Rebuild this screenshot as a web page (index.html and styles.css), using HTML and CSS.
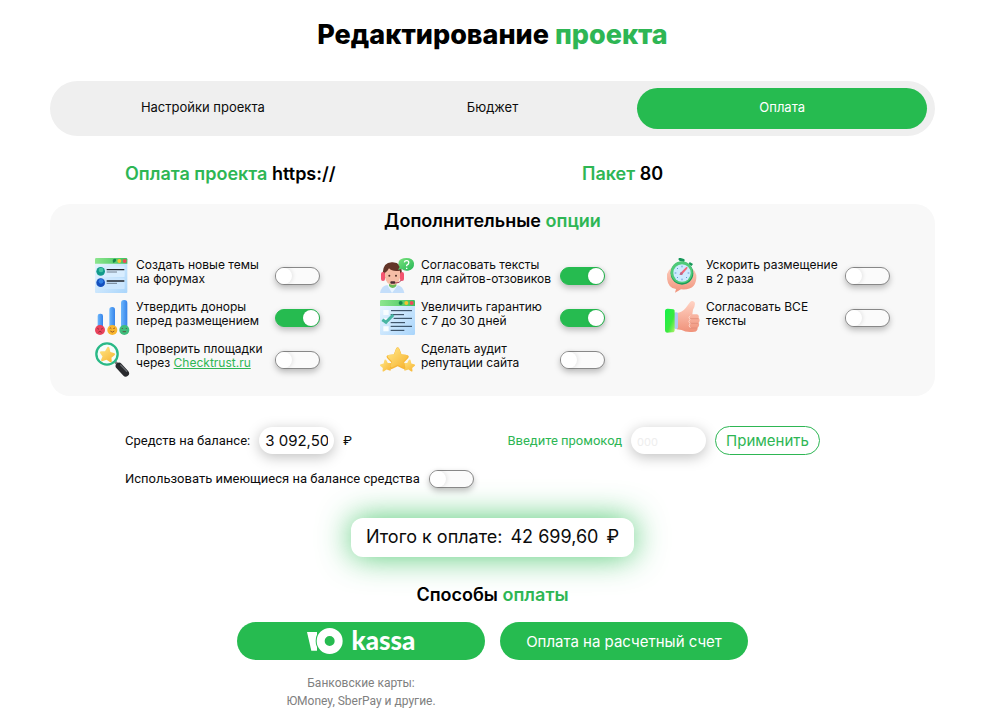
FILE: index.html
```html
<!DOCTYPE html>
<html lang="ru">
<head>
<meta charset="utf-8">
<meta name="viewport" content="width=device-width, initial-scale=1">
<title>Редактирование проекта</title>
<link rel="stylesheet" href="styles.css">
</head>
<body>
<svg class="defs" aria-hidden="true">
  <defs>
    <linearGradient id="sheet" x1="0" y1="0" x2="1" y2="1"><stop offset="0" stop-color="#eef8ff"/><stop offset="1" stop-color="#a9d5fb"/></linearGradient>
    <linearGradient id="bar" x1="0" y1="0" x2="1" y2="0"><stop offset="0" stop-color="#8ee68f"/><stop offset="1" stop-color="#3fc25c"/></linearGradient>
    <linearGradient id="tube" x1="0" y1="0" x2="1" y2="0"><stop offset="0" stop-color="#6cb6fb"/><stop offset="1" stop-color="#3583ea"/></linearGradient>
    <linearGradient id="gold" x1="0" y1="0" x2="1" y2="1"><stop offset="0" stop-color="#ffe889"/><stop offset="1" stop-color="#f7b32f"/></linearGradient>
    <linearGradient id="skin" x1="0" y1="0" x2="0" y2="1"><stop offset="0" stop-color="#ffd3c4"/><stop offset="1" stop-color="#f0927a"/></linearGradient>
    <linearGradient id="leaf" x1="0" y1="0" x2="1" y2="1"><stop offset="0" stop-color="#7be37d"/><stop offset="1" stop-color="#25b556"/></linearGradient>
    <linearGradient id="cuff" x1="0" y1="0" x2="1" y2="1"><stop offset="0" stop-color="#12f24a"/><stop offset="0.6" stop-color="#3be93f"/><stop offset="1" stop-color="#b4f06a"/></linearGradient>
    <path id="star" d="M0-17 Q2-17 3-14 L6-6 L14-5 Q19-4 16 0 L10 6 L12 14 Q12 18 8 16 L0 12 L-8 16 Q-12 18 -12 14 L-10 6 L-16 0 Q-19-4 -14-5 L-6-6 L-3-14 Q-2-17 0-17 Z"/>
  </defs>
</svg>
<main class="page">
  <h1 class="title">Редактирование <span class="accent">проекта</span></h1>

  <nav class="tabs">
    <a class="tab" href="#settings">Настройки проекта</a>
    <a class="tab" href="#budget">Бюджет</a>
    <a class="tab tab-active" href="#payment" aria-current="page">Оплата</a>
  </nav>

  <div class="summary">
    <h2 class="heading"><span class="accent">Оплата проекта</span> https://</h2>
    <h2 class="heading"><span class="accent">Пакет</span> 80</h2>
  </div>

  <section class="options">
    <h2 class="heading">Дополнительные <span class="accent">опции</span></h2>
    <div class="options-grid">
      <div class="option">
        <svg class="icon" viewBox="0 0 105 105" aria-hidden="true">
          <rect x="0" y="1" width="97" height="104" rx="3" fill="url(#sheet)"/>
          <path d="M0 17V4Q0 0 4 0H93Q97 0 97 4V17Z" fill="url(#bar)"/>
          <path d="M53 6q8-8 11 0q-3 9-10 8Z" fill="#15864b"/><circle cx="73" cy="9" r="6" fill="#f6c32f"/><circle cx="89" cy="9" r="6" fill="#ef4a5a"/>
          <rect x="8" y="25" width="81" height="32" rx="2" fill="#d8edff"/><rect x="8" y="61" width="81" height="32" rx="2" fill="#cbe6fe"/>
          <circle cx="17" cy="40" r="13" fill="#129a8b"/><circle cx="18" cy="36" r="7" fill="#43c5a5"/>
          <circle cx="17" cy="74" r="13" fill="#1550be"/><circle cx="18" cy="70" r="7" fill="#3180e5"/>
          <path d="M35 35H88M35 69H88" stroke="#20242c" stroke-width="4"/><path d="M35 42H66M35 76H66" stroke="#404a58" stroke-width="2"/>
        </svg>
        <label class="option-text" for="o1">Создать новые темы<br>на форумах</label>
        <input class="switch" id="o1" type="checkbox">
      </div>
      <div class="option">
        <svg class="icon" viewBox="0 0 105 105" aria-hidden="true">
          <rect x="8" y="41" width="16" height="50" rx="7" fill="url(#tube)"/><rect x="43" y="21" width="17" height="65" rx="8" fill="url(#tube)"/><rect x="78" y="0" width="19" height="86" rx="9" fill="url(#tube)"/>
          <circle cx="15" cy="90" r="15" fill="#e9435c"/><circle cx="52" cy="90" r="15" fill="#f9b62d"/><circle cx="88" cy="90" r="15" fill="#3fbd7c"/>
          <path d="M7 85l5 3M23 85l-5 3M10 97q5-6 10 0M44 86q3-4 5 0M55 86q3-4 5 0M46 93q6 7 12 0M82 87v-3M94 87v-3M83 95h10" stroke="#632b28" stroke-width="2" fill="none"/>
        </svg>
        <label class="option-text" for="o2">Утвердить доноры<br>перед размещением</label>
        <input class="switch" id="o2" type="checkbox" checked>
      </div>
      <div class="option">
        <svg class="icon" viewBox="0 0 105 105" aria-hidden="true">
          <path d="M61 60L74 73" stroke="#777" stroke-width="8"/><path d="M72 72L92 94" stroke="#292a2d" stroke-width="20" stroke-linecap="round"/><path d="M77 69L95 88" stroke="#65686d" stroke-width="4" stroke-linecap="round"/>
          <circle cx="36" cy="36" r="32" fill="#f5fcfa" stroke="#29b987" stroke-width="7"/>
          <use href="#star" transform="translate(37 37) rotate(8) scale(1.35)" fill="url(#gold)"/>
        </svg>
        <div class="option-text"><label for="o3">Проверить площадки<br>через</label> <a class="link" href="#checktrust">Checktrust.ru</a></div>
        <input class="switch" id="o3" type="checkbox">
      </div>

      <div class="option">
        <svg class="icon" viewBox="0 0 105 105" aria-hidden="true">
          <path d="M0 105Q4 83 22 81H52Q69 84 73 105Z" fill="#c4defa"/><path d="M22 81L36 105L54 81Z" fill="#eaf6ff"/><path d="M27 72H49V84Q38 96 27 84Z" fill="#6bbb58"/>
          <path d="M8 45Q10 11 38 13Q66 14 66 48L60 60H15Z" fill="#623528"/><path d="M15 44Q23 40 27 31Q37 42 60 38V59Q57 79 38 81Q18 79 15 58Z" fill="#f6bda6"/>
          <rect x="3" y="42" width="12" height="27" rx="6" fill="#f3546f"/><rect x="60" y="42" width="12" height="27" rx="6" fill="#f3546f"/><path d="M64 66Q60 76 46 75" stroke="#aa4056" stroke-width="3" fill="none"/>
          <circle cx="28" cy="53" r="3" fill="#513025"/><circle cx="48" cy="53" r="3" fill="#513025"/><rect x="31" y="70" width="15" height="7" rx="3" fill="#4b2930"/>
          <path d="M54 35L59 27Q53 20 56 11Q61 0 79 0Q99 0 102 15Q104 35 84 38Q73 40 65 33Z" fill="url(#leaf)"/>
          <path d="M73 13Q74 7 81 8Q89 10 85 18L80 22V25M80 29V33" stroke="#fff" stroke-width="4" fill="none"/>
        </svg>
        <label class="option-text" for="o4">Согласовать тексты<br>для сайтов-отзовиков</label>
        <input class="switch" id="o4" type="checkbox" checked>
      </div>
      <div class="option">
        <svg class="icon" viewBox="0 0 105 105" aria-hidden="true">
          <rect y="1" width="105" height="104" rx="4" fill="url(#sheet)"/><path d="M0 18V4Q0 0 4 0H101Q105 0 105 4V18Z" fill="url(#bar)"/>
          <circle cx="62" cy="9" r="6" fill="#16894d"/><circle cx="79" cy="9" r="6" fill="#f6c32f"/><circle cx="95" cy="9" r="6" fill="#ef4a5a"/>
          <path d="M10 30H26V45H10ZM10 55H26V69H10ZM10 79H26V94H10Z" fill="#f8fdff"/>
          <path d="M33 32H96M32 44H72M41 55H96M32 68H75M32 79H96M32 91H73" stroke="#263b50" stroke-width="3"/>
          <path d="M7 59L18 67L40 44" stroke="#47b6a3" stroke-width="9" fill="none"/>
        </svg>
        <label class="option-text" for="o5">Увеличить гарантию<br>с 7 до 30 дней</label>
        <input class="switch" id="o5" type="checkbox" checked>
      </div>
      <div class="option">
        <svg class="icon" viewBox="0 0 105 105" aria-hidden="true">
          <use href="#star" transform="translate(18 70) rotate(-8) scale(1.05)" fill="url(#gold)"/><use href="#star" transform="translate(87 70) rotate(8) scale(1.05)" fill="url(#gold)"/><use href="#star" transform="translate(53 49) scale(1.95)" fill="#f6b637"/><use href="#star" transform="translate(53 47) scale(1.75)" fill="url(#gold)"/>
        </svg>
        <label class="option-text" for="o6">Сделать аудит<br>репутации сайта</label>
        <input class="switch" id="o6" type="checkbox">
      </div>

      <div class="option">
        <svg class="icon" viewBox="0 0 105 105" aria-hidden="true">
          <path d="M6 48Q4 80 22 90L33 93L30 104L48 94Q97 98 94 51Q87 24 51 22Q14 22 6 48Z" fill="url(#skin)"/>
          <path d="M40 4Q41-2 47 0L57 3Q61 6 57 12L44 9Z" fill="#159758"/><path d="M74 12L84 18L80 24L71 19Z" fill="#159758"/>
          <circle cx="51" cy="46" r="34" fill="#159b59"/><circle cx="50" cy="43" r="33" fill="#4fca79"/><circle cx="51" cy="45" r="26" fill="#cdeaff"/>
          <path d="M51 23v5M51 62v5M29 45h5M68 45h5M36 30l3 3M66 60l-3-3M36 60l3-3" stroke="#6297cf" stroke-width="3"/><path d="M64 27Q71 27 65 34L50 51L43 50L46 45Z" fill="#f26775"/><circle cx="49" cy="47" r="4" fill="#b66a8c"/>
        </svg>
        <label class="option-text" for="o7">Ускорить размещение<br>в 2 раза</label>
        <input class="switch" id="o7" type="checkbox">
      </div>
      <div class="option">
        <svg class="icon" viewBox="0 0 105 105" aria-hidden="true">
          <path d="M35 39Q51 38 62 24L75 7Q81-1 88 6Q93 12 84 29L82 43H96Q103 45 101 53Q107 61 101 68Q105 77 98 83Q98 94 88 95Q63 98 50 90L35 88Z" fill="url(#skin)"/>
          <path d="M74 56H100M74 70H99M74 84H96" stroke="#dd8673" stroke-width="2"/><path d="M76 47Q68 51 75 58Q68 65 75 71Q69 78 76 83" stroke="#ffd5c8" stroke-width="3" fill="none"/>
          <rect x="27" y="37" width="12" height="50" rx="5" fill="#b1c8f5"/><path d="M0 34Q0 25 9 26L25 28Q30 29 29 36V89Q29 97 22 97L6 98Q0 98 0 91Z" fill="url(#cuff)"/>
        </svg>
        <label class="option-text" for="o8">Согласовать ВСЕ<br>тексты</label>
        <input class="switch" id="o8" type="checkbox">
      </div>
    </div>
  </section>

  <form class="payment">
    <div class="payment-row">
      <div class="balance">
        <label for="balance">Средств на балансе:</label>
        <input class="pill" id="balance" type="text" value="3 092,50" readonly>
        <span>₽</span>
      </div>
      <div class="promo">
        <label class="accent" for="promo">Введите промокод</label>
        <input class="pill" id="promo" type="text" placeholder="000">
        <button class="apply" type="button">Применить</button>
      </div>
    </div>
    <div class="use-balance">
      <label for="use">Использовать имеющиеся на балансе средства</label>
      <input class="switch" id="use" type="checkbox">
    </div>
  </form>

  <p class="total"><span>Итого к оплате:</span><span class="total-sum">42 699,60</span><span class="total-sum">₽</span></p>

  <section class="methods">
    <h2 class="heading">Способы <span class="accent">оплаты</span></h2>
    <div class="methods-row">
      <div class="method">
        <button class="pay kassa" type="button">
          <svg class="kassa-mark" viewBox="0 0 108 78" aria-hidden="true"><path d="M0 12H30V68H13Z" fill="#fff"/><circle cx="68" cy="39" r="28" fill="none" stroke="#26bb50" stroke-width="28"/><circle cx="68" cy="39" r="27" fill="none" stroke="#fff" stroke-width="24"/></svg>
          <span class="kassa-name">kassa</span>
        </button>
        <p class="note">Банковские карты:<br>ЮMoney, SberPay и другие.</p>
      </div>
      <div class="method">
        <button class="pay" type="button">Оплата на расчетный счет</button>
      </div>
    </div>
  </section>
</main>
</body>
</html>
```
FILE: styles.css
```css
* {
  box-sizing: border-box;
}

body {
  margin: 0;
  background: #fff;
  color: #0c0c0c;
  font-family: Inter, Roboto, "Liberation Sans", sans-serif;
  font-size: 13px;
  line-height: 18px;
}

h1,
h2,
p {
  margin: 0;
}

input,
button {
  margin: 0;
  font-family: inherit;
}

.defs {
  position: absolute;
  width: 0;
  height: 0;
}

.page {
  padding: 18px 57px 12px 50px;
}

.accent {
  color: #2eb654;
}

.title {
  color: #000;
  text-align: center;
  font-size: 27px;
  line-height: 34px;
  font-weight: 800;
}

.heading {
  color: #000;
  font-size: 18px;
  line-height: 24px;
  font-weight: 600;
}

.tabs {
  display: grid;
  grid-template-columns: repeat(3, 1fr);
  margin-top: 29px;
  padding: 7px 8px;
  border-radius: 28px;
  background: #efefef;
}

.tab {
  padding: 10px 0 13px;
  border-radius: 21px;
  color: inherit;
  text-align: center;
  text-decoration: none;
}

.tab-active {
  background: #26bb50;
  color: #fff;
}

.summary {
  display: grid;
  grid-template-columns: 457px 1fr;
  margin-top: 26px;
  padding-left: 75px;
}

.options {
  margin-top: 18px;
  padding: 5px 45px 19px;
  border-radius: 20px;
  background: #f8f8f8;
  text-align: center;
}

.options-grid {
  display: grid;
  grid-template-rows: repeat(3, 35px);
  grid-auto-flow: column;
  grid-auto-columns: 225px;
  gap: 7px 60px;
  margin-top: 25px;
  text-align: left;
}

.option {
  display: flex;
  align-items: center;
  gap: 6px;
}

.icon {
  flex: none;
  width: 35px;
  height: 35px;
}

.option-text {
  flex: 1;
  margin-bottom: 8px;
  font-size: 12px;
  line-height: 14px;
  white-space: nowrap;
}

.link {
  color: #2eb654;
}

.switch {
  appearance: none;
  display: flex;
  flex: none;
  width: 45px;
  height: 18px;
  border: 1px solid #888;
  border-radius: 9px;
  background: #fbfbfb;
  box-shadow: 0 3px 6px rgba(0, 0, 0, 0.25);
}

.switch::before {
  content: "";
  width: 16px;
  height: 16px;
  border-radius: 50%;
  background: #fff;
  box-shadow: 1px 0 4px rgba(0, 0, 0, 0.1);
}

.switch:checked {
  justify-content: flex-end;
  border-color: #26bb50;
  background: #26bb50;
}

.payment {
  margin-top: 30px;
  padding: 0 75px;
  font-family: Roboto, sans-serif;
}

.payment-row,
.balance,
.promo,
.use-balance {
  display: flex;
  align-items: center;
}

.payment-row {
  justify-content: space-between;
}

.promo {
  margin-right: 40px;
}

.balance,
.promo,
.use-balance {
  gap: 9px;
}

.pill {
  width: 75px;
  height: 27px;
  padding: 0 6px;
  border: 0;
  border-radius: 14px;
  background: #fff;
  box-shadow: 0 3px 14px rgba(0, 0, 0, 0.25);
  color: #0c0c0c;
  font-family: Inter, sans-serif;
  font-size: 15px;
}

.pill::placeholder {
  color: #eee;
  font-size: 11px;
}

.apply {
  width: 105px;
  height: 29px;
  padding: 0;
  border: 1px solid #2eb654;
  border-radius: 15px;
  background: #fff;
  color: #2eb654;
  font-family: Inter, sans-serif;
  font-size: 15px;
}

.use-balance {
  margin-top: 15px;
}

.total {
  display: flex;
  align-items: center;
  gap: 8px;
  width: fit-content;
  margin: 30px auto 0;
  padding: 7px 15px 8px;
  border-radius: 12px;
  background: #fff;
  box-shadow: 0 0 32px rgba(38, 187, 80, 0.8);
  font-size: 18px;
  line-height: 24px;
}

.methods {
  margin-top: 26px;
  text-align: center;
}

.methods-row {
  display: flex;
  justify-content: center;
  gap: 15px;
  margin-top: 15px;
}

.method {
  width: 248px;
}

.pay {
  display: flex;
  align-items: center;
  justify-content: center;
  width: 100%;
  height: 38px;
  padding: 0;
  border: 0;
  border-radius: 19px;
  background: #26bb50;
  color: #fff;
  font-size: 15px;
}

.kassa {
  gap: 9px;
}

.kassa-name {
  padding-bottom: 3px;
  font-family: Lato, sans-serif;
  font-size: 26px;
  line-height: 28px;
  font-weight: 900;
}

.kassa-mark {
  width: 36px;
  height: 26px;
}

.note {
  margin-top: 14px;
  color: #808080;
  font-family: Roboto, sans-serif;
  font-size: 12px;
}
```
